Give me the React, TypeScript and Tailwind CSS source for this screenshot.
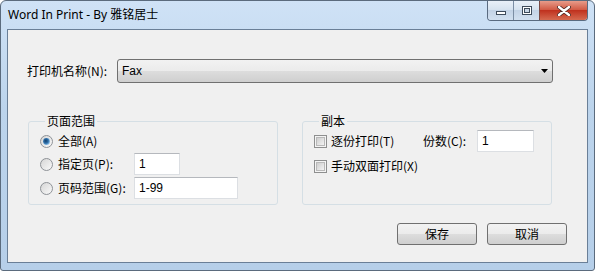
import type { ReactNode } from 'react';

const CJK = "font-['Noto_Sans_CJK_SC','Noto_Sans',sans-serif]";
const LATIN = "font-['Liberation_Sans','Noto_Sans_CJK_SC',sans-serif]";

const Radio = ({ checked }: { checked?: boolean }) => (
	<svg viewBox="0 0 13 13" className="h-[13px] w-[13px] shrink-0">
		<defs>
			<linearGradient id="rg" x1="0" y1="0" x2="1" y2="1">
				<stop offset="0" stopColor="#d4d4d4" />
				<stop offset="1" stopColor="#fbfbfb" />
			</linearGradient>
			<radialGradient id="rc" cx="0.4" cy="0.4" r="0.6">
				<stop offset="0" stopColor="#0f3f6e" />
				<stop offset="0.6" stopColor="#2f6fa8" />
				<stop offset="1" stopColor="#7fb8e6" />
			</radialGradient>
		</defs>
		<circle cx="6.5" cy="6.5" r="6" fill="url(#rg)" stroke="#8e9297" />
		{checked && <circle cx="6.5" cy="6.5" r="3.4" fill="url(#rc)" />}
	</svg>
);

const Checkbox = () => (
	<svg viewBox="0 0 13 13" className="h-[13px] w-[13px] shrink-0">
		<defs>
			<linearGradient id="cg" x1="0" y1="0" x2="1" y2="1">
				<stop offset="0" stopColor="#cbcbcb" />
				<stop offset="1" stopColor="#f6f6f6" />
			</linearGradient>
		</defs>
		<rect x="0.5" y="0.5" width="12" height="12" fill="#f4f4f4" stroke="#8e8f8f" />
		<rect x="2.5" y="2.5" width="8" height="8" fill="url(#cg)" stroke="#b9b9b9" />
	</svg>
);

const TextBox = ({ value, width }: { value: string; width: string }) => (
	<div
		className={`flex h-[22px] ${width} items-center border border-[#dcdfe3] border-t-[#b5b8bd] bg-white px-[4px] text-[12px] text-black ${LATIN}`}
	>
		{value}
	</div>
);

const Group = ({ title, children }: { title: string; children: ReactNode }) => (
	<fieldset className="w-[250px] rounded-[3px] border border-[#d5dfe5] pb-[5px] pl-[11px] pt-[1px]">
		<legend className={`ml-[5px] px-[2px] text-[12px] leading-[16px] text-black ${CJK}`}>
			{title}
		</legend>
		{children}
	</fieldset>
);

const DialogButton = ({ label }: { label: string }) => (
	<button
		type="button"
		className={`h-[22px] w-[80px] rounded-[3px] border border-[#707070] bg-[linear-gradient(to_bottom,#f2f2f2_0%,#ebebeb_50%,#dddddd_50%,#cfcfcf_100%)] text-[12px] text-black ${CJK}`}
	>
		{label}
	</button>
);

export default function App() {
	return (
		<div className="h-[271px] w-[595px] bg-white">
			<div className="flex h-full flex-col rounded-t-[6px] rounded-b-[3px] border border-[#5b6b7d] bg-[linear-gradient(to_bottom,#cfe2f6,#bcd4ec_40%,#b6cfe9)] px-[6px] pb-[7px]">
				{/* title bar */}
				<div className="flex h-[28px] items-start justify-between">
					<span className={`pl-[1px] pt-[6px] text-[12px] leading-[16px] text-black ${"font-['Noto_Sans','Noto_Sans_CJK_SC',sans-serif]"}`}>
						Word In Print - By 雅铭居士
					</span>
					<div className="flex h-[20px] overflow-hidden rounded-b-[4px] border border-t-0 border-[#5a6b80]">
						<div className="flex w-[26px] items-end justify-center border-r border-[#7c8ea4] bg-[linear-gradient(to_bottom,#e9f0f8,#d5e1ee_50%,#c3d3e6_50%,#d2e0f0)] pb-[5px]">
							<div className="h-[4px] w-[10px] border border-[#3e4b5b] bg-white" />
						</div>
						<div className="flex w-[26px] items-center justify-center border-r border-[#7a4a44] bg-[linear-gradient(to_bottom,#e9f0f8,#d5e1ee_50%,#c3d3e6_50%,#d2e0f0)]">
							<div className="h-[9px] w-[10px] border border-[#3e4b5b] bg-white p-[1px]">
								<div className="h-full w-full border border-[#3e4b5b] bg-[#c9d6e5]" />
							</div>
						</div>
						<div className="flex w-[47px] items-center justify-center bg-[linear-gradient(to_bottom,#e79c8a,#d0553f_50%,#c0321f_50%,#d56a50)]">
							<svg viewBox="0 0 14 10" className="h-[10px] w-[14px]">
								<path
									d="M2 1 L12 9 M12 1 L2 9"
									stroke="#4a2a26"
									strokeWidth="4"
									strokeLinecap="round"
								/>
								<path
									d="M2 1 L12 9 M12 1 L2 9"
									stroke="#ffffff"
									strokeWidth="2.4"
									strokeLinecap="round"
								/>
							</svg>
						</div>
					</div>
				</div>

				{/* client area */}
				<div className="flex flex-1 flex-col border border-[#6a7f97] bg-[#f0f0f0]">
					<div className="mt-[29px] flex items-center pl-[19px]">
						<span className={`w-[90px] text-[12px] text-black ${CJK}`}>打印机名称(N):</span>
						<div className="flex h-[24px] w-[436px] items-center justify-between rounded-[3px] border border-[#707070] bg-[linear-gradient(to_bottom,#f2f2f2_0%,#ebebeb_50%,#dddddd_50%,#cfcfcf_100%)] pl-[4px] pr-[4px]">
							<span className={`text-[12px] text-black ${LATIN}`}>Fax</span>
							<svg viewBox="0 0 7 4" className="h-[4px] w-[7px]">
								<path d="M0 0 H7 L3.5 4 Z" fill="#000" />
							</svg>
						</div>
					</div>

					<div className="ml-[20px] mt-[30px] flex gap-[24px]">
						<Group title="页面范围">
							<div className="flex h-[22px] items-center gap-[5px]">
								<Radio checked />
								<span className={`text-[12px] text-black ${CJK}`}>全部(A)</span>
							</div>
							<div className="mt-[1px] flex h-[22px] items-center">
								<div className="flex w-[94px] items-center gap-[5px]">
									<Radio />
									<span className={`text-[12px] text-black ${CJK}`}>指定页(P):</span>
								</div>
								<TextBox value="1" width="w-[46px]" />
							</div>
							<div className="mt-[2px] flex h-[22px] items-center">
								<div className="flex w-[94px] items-center gap-[5px]">
									<Radio />
									<span className={`text-[12px] text-black ${CJK}`}>页码范围(G):</span>
								</div>
								<TextBox value="1-99" width="w-[104px]" />
							</div>
						</Group>

						<Group title="副本">
							<div className="flex h-[22px] items-center">
								<div className="flex w-[109px] items-center gap-[4px]">
									<Checkbox />
									<span className={`text-[12px] text-black ${CJK}`}>逐份打印(T)</span>
								</div>
								<span className={`w-[54px] text-[12px] text-black ${CJK}`}>份数(C):</span>
								<TextBox value="1" width="w-[57px]" />
							</div>
							<div className="mt-[3px] flex h-[22px] items-center gap-[4px]">
								<Checkbox />
								<span className={`text-[12px] text-black ${CJK}`}>手动双面打印(X)</span>
							</div>
						</Group>
					</div>

					<div className="mt-[18px] flex justify-end gap-[10px] pr-[20px]">
						<DialogButton label="保存" />
						<DialogButton label="取消" />
					</div>
				</div>
			</div>
		</div>
	);
}
